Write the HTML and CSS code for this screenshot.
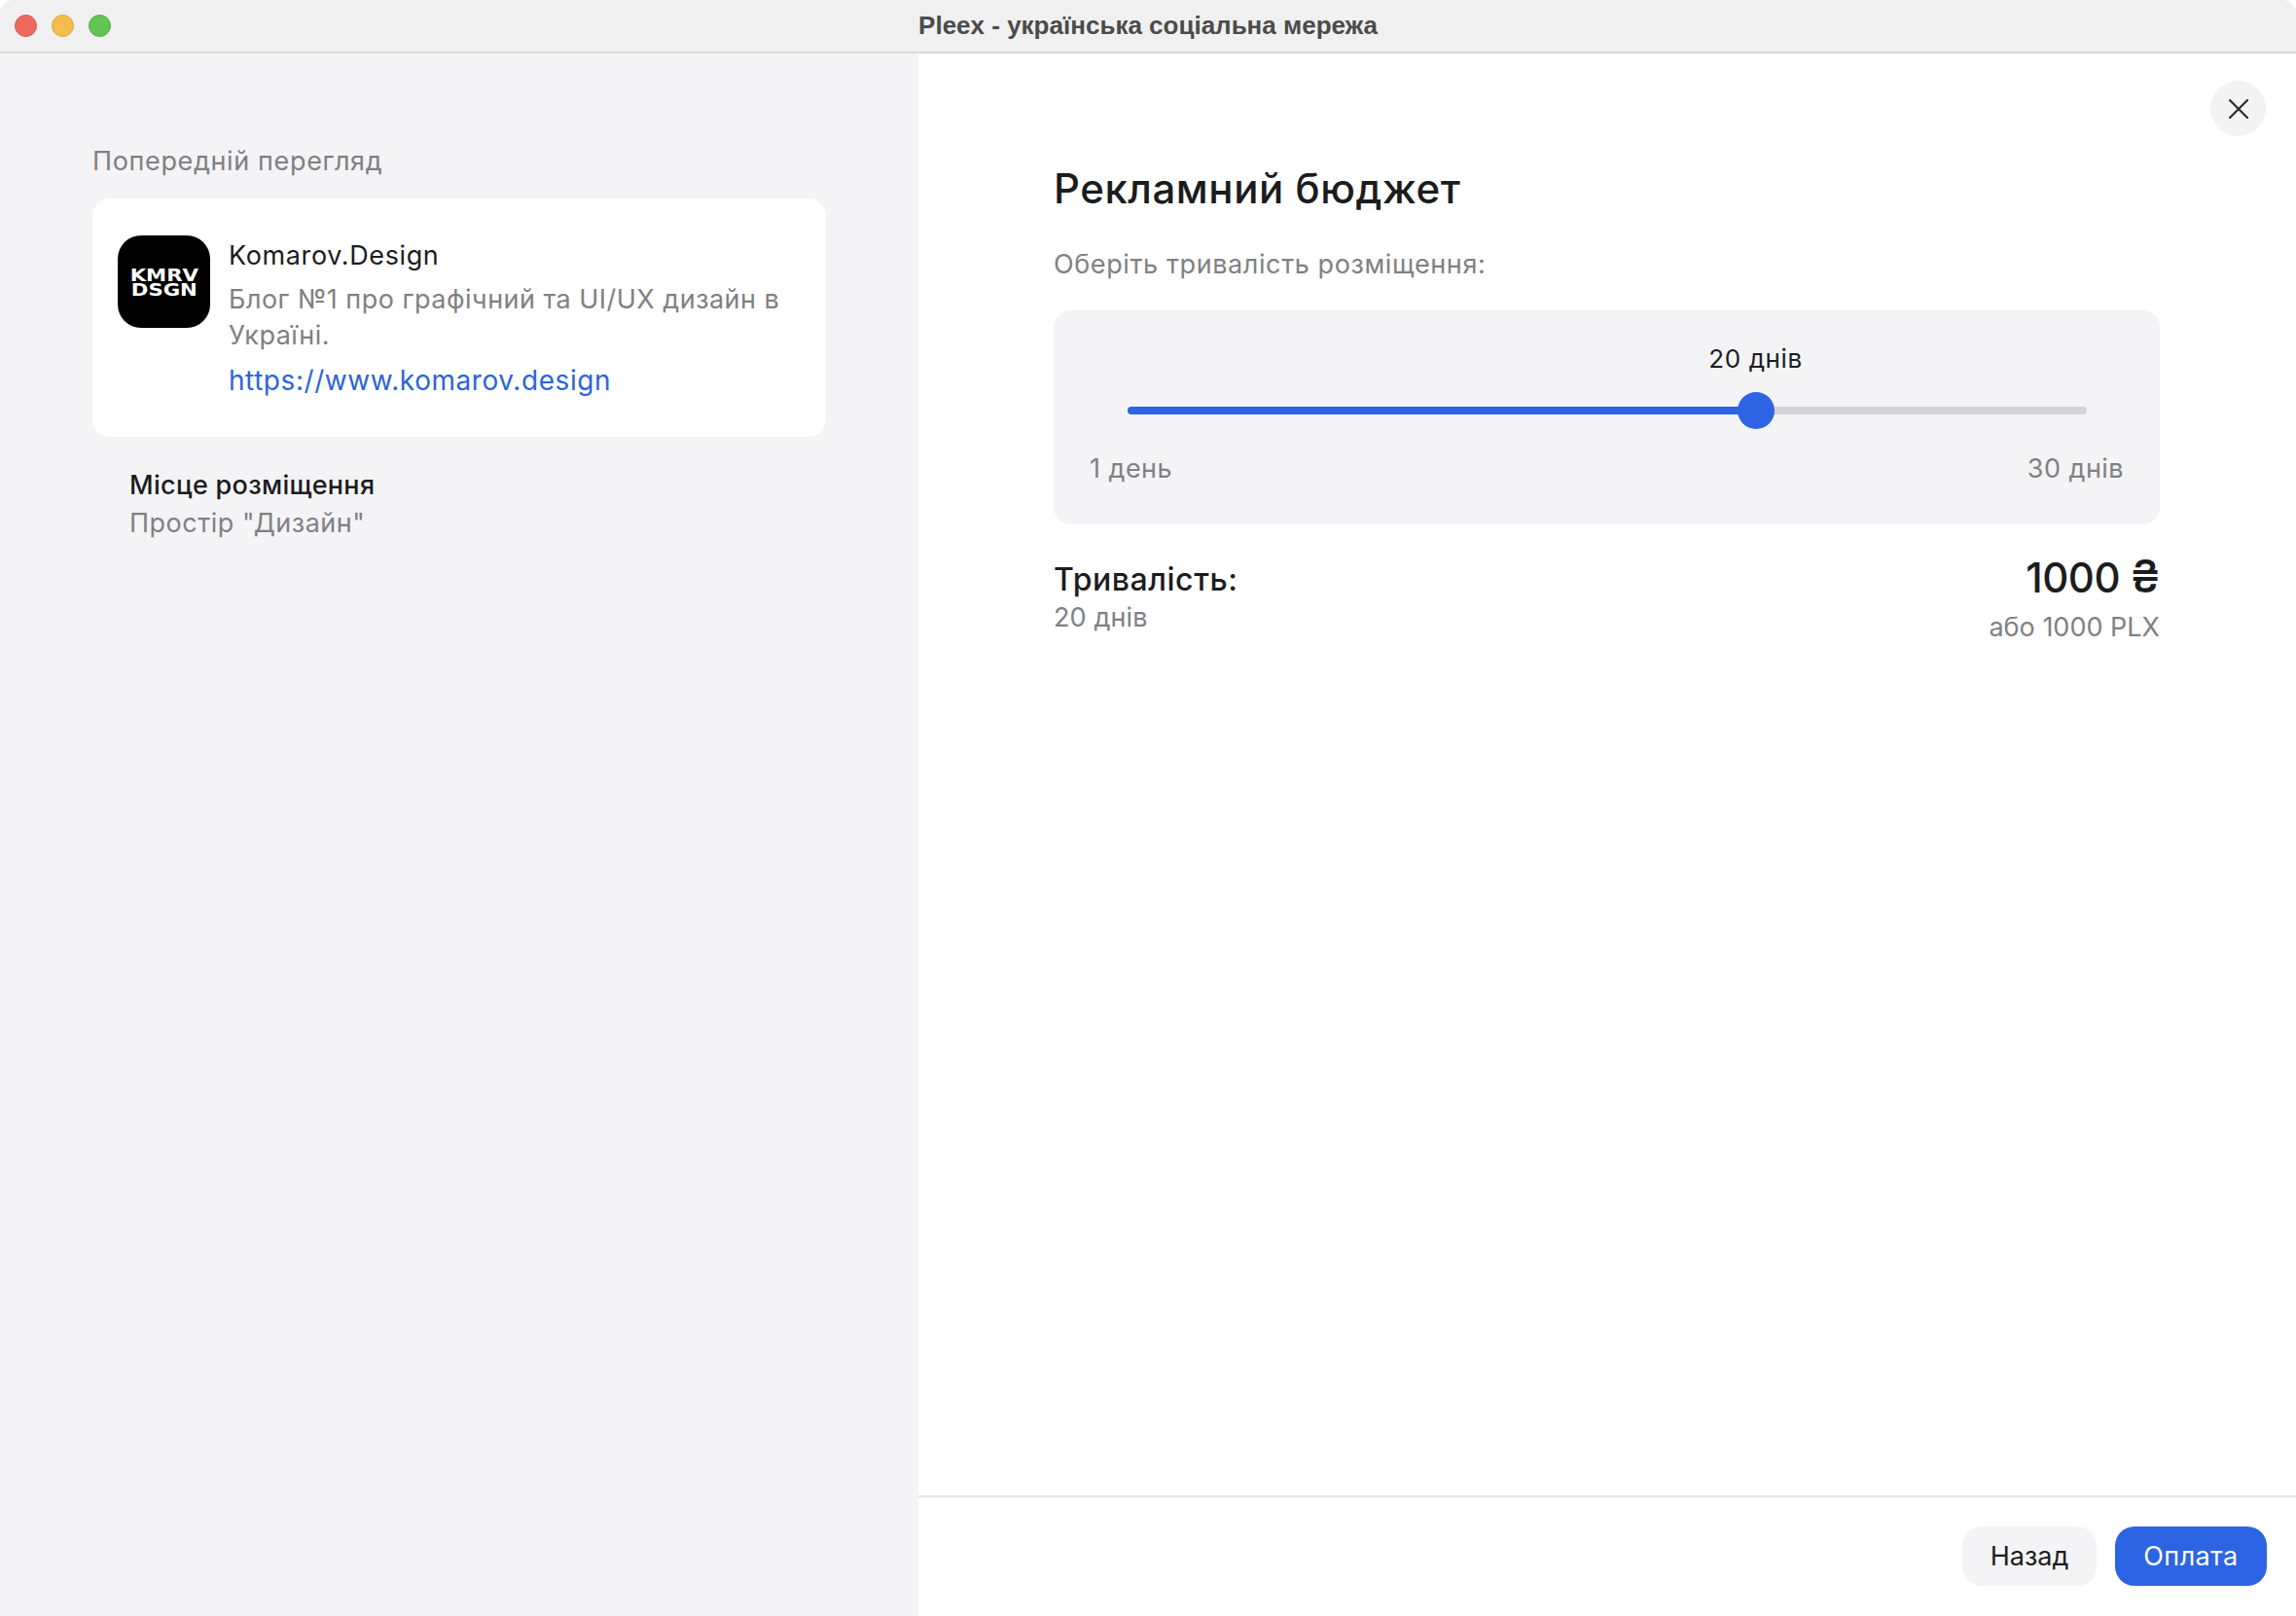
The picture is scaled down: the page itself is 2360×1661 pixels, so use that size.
FILE: index.html
```html
<!DOCTYPE html>
<html lang="uk">
<head>
<meta charset="utf-8">
<title>Pleex</title>
<link rel="stylesheet" href="styles.css">
</head>
<body>
<div class="window">
  <header class="titlebar">
    <div class="lights">
      <span class="light light-red"></span>
      <span class="light light-yellow"></span>
      <span class="light light-green"></span>
    </div>
    <div class="window-title">Pleex - українська соціальна мережа</div>
    <div></div>
  </header>
  <div class="content">
    <aside class="sidebar">
      <div class="preview-label">Попередній перегляд</div>
      <div class="card">
        <div class="logo"><div class="logo-text"><div class="logo-line">KMRV</div><div class="logo-line">DSGN</div></div></div>
        <div class="card-body">
          <div class="card-name">Komarov.Design</div>
          <div class="card-desc">Блог №1 про графічний та UI/UX дизайн в Україні.</div>
          <div class="card-link">https://www.komarov.design</div>
        </div>
      </div>
      <div class="place">
        <div class="place-title">Місце розміщення</div>
        <div class="place-value">Простір "Дизайн"</div>
      </div>
    </aside>
    <main class="main">
      <button class="close" aria-label="Закрити">
        <svg width="20" height="20" viewBox="0 0 20 20" fill="none"><path d="M1 1L19 19M19 1L1 19" stroke="#2b2b2e" stroke-width="2.2" stroke-linecap="round"/></svg>
      </button>
      <div class="main-body">
        <h1 class="heading">Рекламний бюджет</h1>
        <div class="subheading">Оберіть тривалість розміщення:</div>
        <section class="panel">
          <div class="slider-value">20 днів</div>
          <div class="track">
            <div class="track-fill" style="width:65.5%"><span class="thumb"></span></div>
          </div>
          <div class="range-labels"><span>1 день</span><span>30 днів</span></div>
        </section>
        <section class="summary">
          <div>
            <div class="summary-title">Тривалість:</div>
            <div class="summary-sub">20 днів</div>
          </div>
          <div class="summary-right">
            <div class="price">1000 <span class="currency">₴</span></div>
            <div class="price-sub">або 1000 PLX</div>
          </div>
        </section>
      </div>
      <footer class="footer">
        <button class="btn btn-back">Назад</button>
        <button class="btn btn-pay">Оплата</button>
      </footer>
    </main>
  </div>
</div>
</body>
</html>
```
FILE: styles.css
```css
* { box-sizing: border-box; }
html, body { margin: 0; padding: 0; height: 100%; background: #fff; }
body { font-family: "Inter", "Noto Sans", sans-serif; color: #1c1c1e; }
.window { width: 2360px; height: 1661px; display: flex; flex-direction: column; border-radius: 14px 14px 0 0; overflow: hidden; }
.titlebar { height: 55px; flex: none; display: grid; grid-template-columns: 1fr auto 1fr; align-items: center; background: #f0f0f0; border-bottom: 2px solid #d9d9d9; }
.lights { display: flex; gap: 15px; padding-left: 15px; }
.light { width: 23px; height: 23px; border-radius: 50%; }
.light-red { background: #ee6a5f; border: 1px solid #d9564c; }
.light-yellow { background: #f5bd4f; border: 1px solid #dfa63a; }
.light-green { background: #61c454; border: 1px solid #50ae44; }
.window-title { font-family: "Liberation Sans", sans-serif; font-weight: 700; font-size: 26px; color: #4b4b4b; }
.content { flex: 1; display: flex; min-height: 0; }
.sidebar { width: 944px; flex: none; background: #f4f4f6; padding: 93px 95px 0; }
.preview-label { font-size: 27px; line-height: 36px; color: #7f7f83; letter-spacing: 0.63px; }
.card { margin-top: 20px; height: 245px; background: #fff; border-radius: 18px; padding: 38px 26px 0; display: flex; gap: 19px; }
.logo { width: 95px; height: 95px; flex: none; border-radius: 24px; background: #000; color: #fff; display: flex; align-items: center; justify-content: center; }
.logo-text { font-family: "DejaVu Sans", sans-serif; font-weight: 700; font-size: 18px; line-height: 15px; text-align: center; transform: scaleX(1.18); }
.logo-line { height: 15px; }
.card-body { flex: 1; min-width: 0; padding-top: 3px; }
.card-name { font-size: 27px; line-height: 36px; color: #1c1c1e; font-weight: 400; letter-spacing: 0.62px; }
.card-desc { margin-top: 8px; font-size: 27px; line-height: 37px; color: #808084; letter-spacing: 0.47px; }
.card-link { margin-top: 10px; font-size: 28px; line-height: 36px; color: #2d64d8; letter-spacing: 0.56px; }
.place { padding: 32px 38px 0; }
.place-title { font-size: 27px; line-height: 36px; font-weight: 500; letter-spacing: 0.3px; }
.place-value { margin-top: 3px; font-size: 27px; line-height: 36px; color: #808084; letter-spacing: 0.5px; }
.main { flex: 1; position: relative; display: flex; flex-direction: column; background: #fff; min-width: 0; }
.close { position: absolute; top: 28px; right: 31px; width: 57px; height: 57px; border: 0; border-radius: 50%; background: #f3f3f4; display: flex; align-items: center; justify-content: center; padding: 0; }
.main-body { flex: 1; padding: 112px 140px 0 139px; }
.heading { margin: 0; font-size: 42px; line-height: 54px; font-weight: 500; color: #1c1c1e; letter-spacing: 0.55px; }
.subheading { margin-top: 33px; font-size: 27px; line-height: 36px; color: #808084; letter-spacing: 0.6px; }
.panel { margin-top: 29px; height: 220px; background: #f4f4f6; border-radius: 18px; padding: 32px 37px 0; }
.slider-value { text-align: center; font-size: 26px; line-height: 36px; padding-left: 306px; color: #1c1c1e; letter-spacing: 0.6px; }
.track { position: relative; height: 8px; margin: 31px 38px 0 39px; background: #d2d4da; border-radius: 4px; }
.track-fill { position: relative; height: 100%; background: #2d64e3; border-radius: 4px; }
.thumb { position: absolute; right: -19px; top: -15px; width: 38px; height: 38px; border-radius: 50%; background: #2d64e3; }
.range-labels { display: flex; justify-content: space-between; margin-top: 38px; font-size: 27px; line-height: 36px; color: #808084; letter-spacing: 0.45px; }
.summary { display: flex; justify-content: space-between; align-items: flex-start; margin-top: 31px; }
.summary-title { font-size: 32px; line-height: 44px; font-weight: 500; margin-top: 4px; letter-spacing: 0.55px; }
.summary-sub { font-size: 27px; line-height: 36px; color: #808084; letter-spacing: 0.1px; margin-top: -1px; }
.summary-right { text-align: right; }
.price { font-size: 42px; line-height: 48px; font-weight: 500; letter-spacing: -0.5px; }
.currency { font-size: 46px; line-height: 0; }
.price-sub { margin-top: 9px; font-size: 27px; line-height: 36px; color: #808084; }
.footer { height: 124px; flex: none; border-top: 2px solid #e6e6e8; display: flex; justify-content: flex-end; align-items: flex-start; gap: 19px; padding: 30px 30px 0 0; }
.btn { height: 61px; border: 0; border-radius: 20px; font-family: inherit; font-size: 27px; padding: 0; }
.btn-back { width: 138px; background: #f4f4f6; color: #1c1c1e; }
.btn-pay { width: 156px; background: #2d64e3; color: #fff; letter-spacing: 0.4px; }
```
